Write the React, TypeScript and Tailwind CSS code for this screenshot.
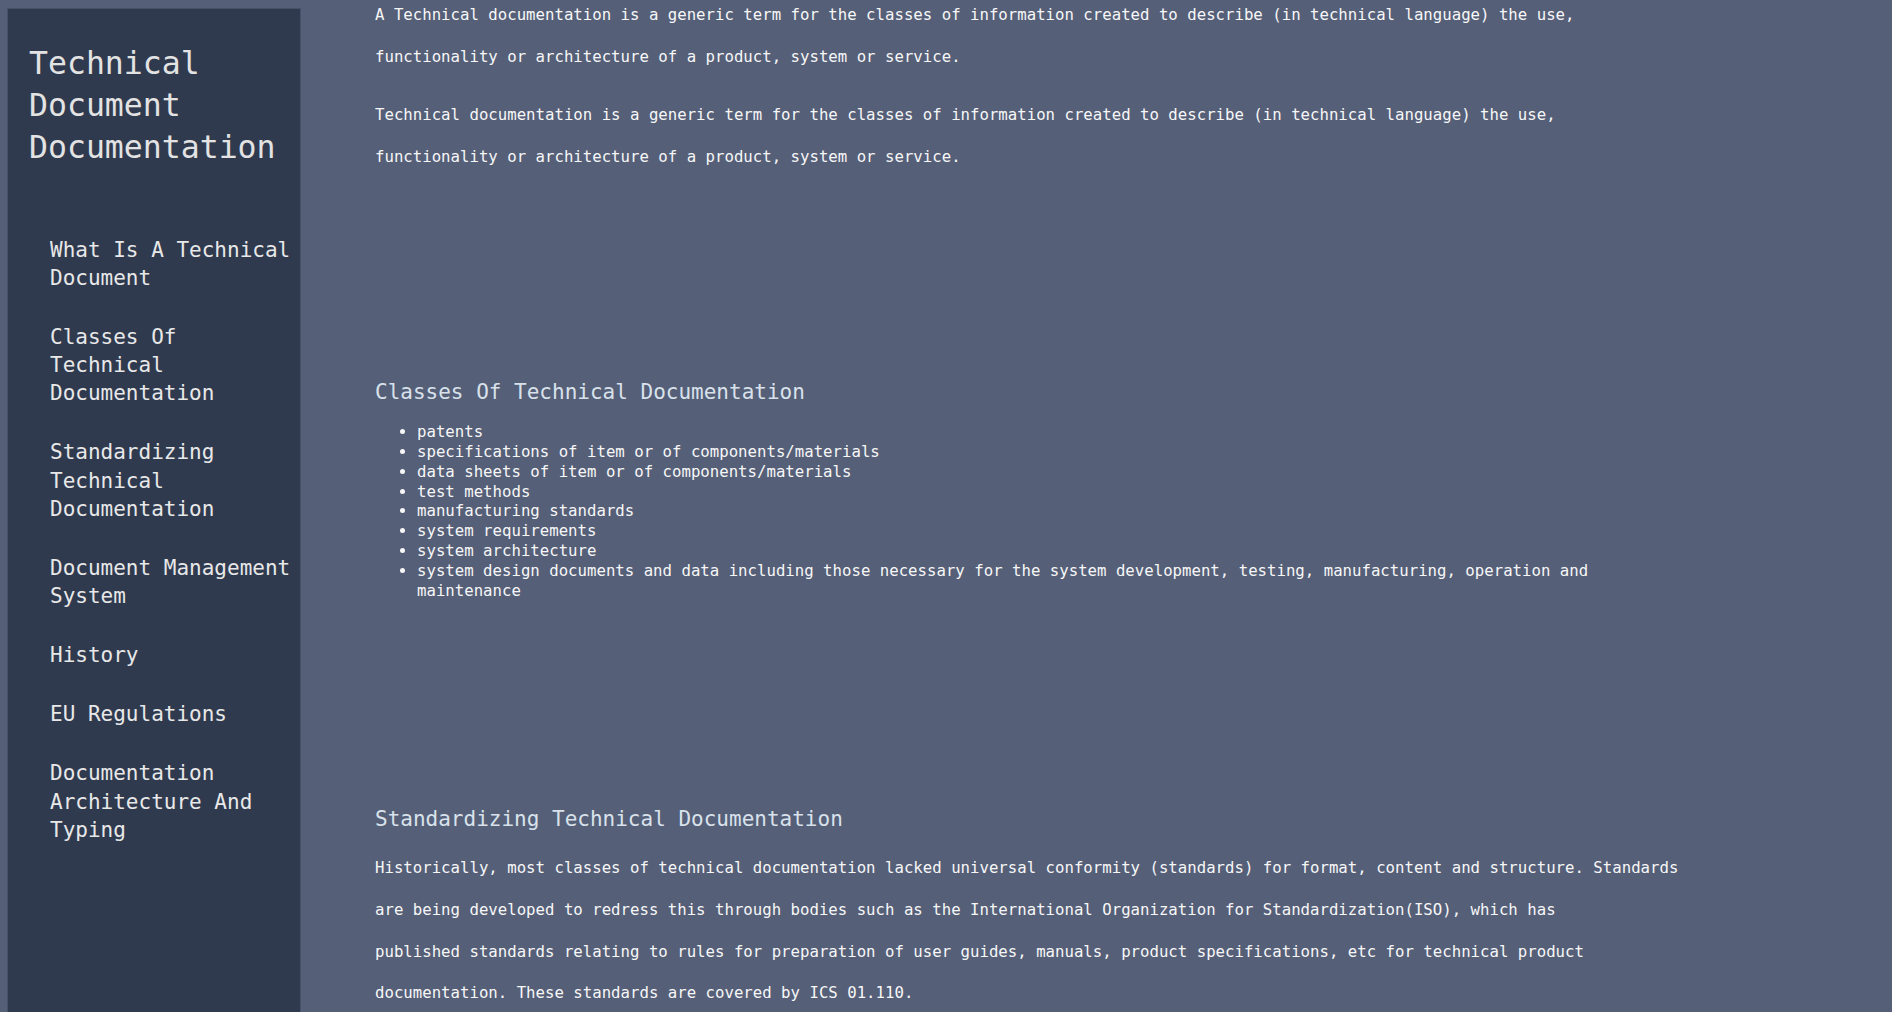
const navItems = [
  "What Is A Technical Document",
  "Classes Of Technical Documentation",
  "Standardizing Technical Documentation",
  "Document Management System",
  "History",
  "EU Regulations",
  "Documentation Architecture And Typing",
];

const classes = [
  "patents",
  "specifications of item or of components/materials",
  "data sheets of item or of components/materials",
  "test methods",
  "manufacturing standards",
  "system requirements",
  "system architecture",
  "system design documents and data including those necessary for the system development, testing, manufacturing, operation and maintenance",
];

function Sidebar() {
  return (
    <nav className="ml-[7px] mt-[8px] w-[294px] shrink-0 border border-b-0 border-[#46516a] bg-[#2f3a4f] pt-[33px]">
      <h1 className="pl-[21px] text-[31.5px] leading-[42.2px] text-[#e3e3e3]">
        Technical
        <br />
        Document
        <br />
        Documentation
      </h1>
      <ul className="mt-[67px] flex flex-col gap-[30.8px] pl-[42px]">
        {navItems.map((item) => (
          <li key={item}>
            <a href="#" className="block text-[21px] leading-[28.25px] text-[#e8e8e8]">
              {item}
            </a>
          </li>
        ))}
      </ul>
    </nav>
  );
}

export default function App() {
  return (
    <div className="flex h-screen overflow-hidden bg-[#555f78] font-['DejaVu_Sans_Mono',monospace]">
      <Sidebar />
      <main className="mt-[-6px] w-[1389px] shrink-0 pl-[74px] text-[15.7px] text-[#f7f7f7]">
        <section>
          <p className="leading-[41.7px]">
            A Technical documentation is a generic term for the classes of information created to describe (in technical language) the use,
            <br />
            functionality or architecture of a product, system or service.
          </p>
          <p className="mt-[17px] leading-[41.7px]">
            Technical documentation is a generic term for the classes of information created to describe (in technical language) the use,
            <br />
            functionality or architecture of a product, system or service.
          </p>
        </section>

        <section className="mt-[200px]">
          <h2 className="text-[21px] leading-[28px] text-[#d9e2eb]">Classes Of Technical Documentation</h2>
          <ul className="mt-[16px] list-disc pl-[42px] leading-[19.9px]">
            {classes.map((c) => (
              <li key={c}>{c}</li>
            ))}
          </ul>
        </section>

        <section className="mt-[204px]">
          <h2 className="text-[21px] leading-[28px] text-[#d9e2eb]">Standardizing Technical Documentation</h2>
          <p className="mt-[14px] leading-[41.8px]">
            Historically, most classes of technical documentation lacked universal conformity (standards) for format, content and structure. Standards
            <br />
            are being developed to redress this through bodies such as the International Organization for Standardization(ISO), which has
            <br />
            published standards relating to rules for preparation of user guides, manuals, product specifications, etc for technical product
            <br />
            documentation. These standards are covered by ICS 01.110.
          </p>
        </section>
      </main>
    </div>
  );
}
